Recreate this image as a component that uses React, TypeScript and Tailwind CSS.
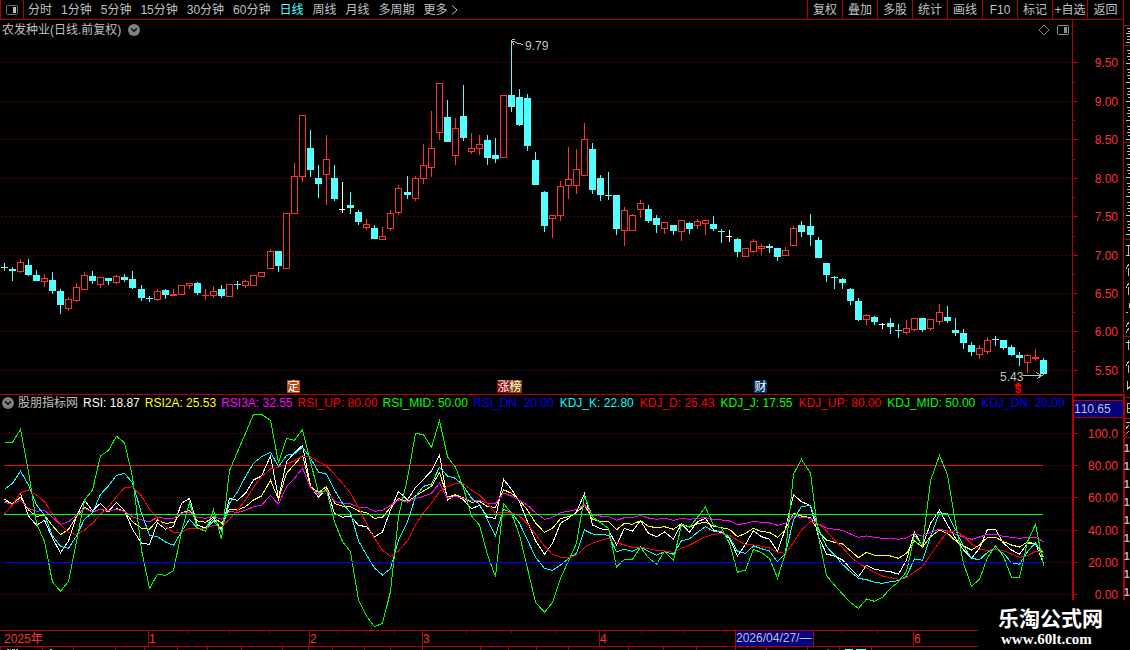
import { ChevronDown } from 'lucide-react';

type Tone = 'up' | 'down' | 'flat';
// tone, high, body top, body bottom, low
type Candle = [string, number, number, number, number];

const TONES: Record<string, Tone> = { u: 'up', d: 'down', f: 'flat' };
const TONE_COLORS: Record<Tone, string> = { up: '#ff3232', down: '#54ffff', flat: '#ffffff' };

const LINE = '#b40000';
const GRID = '#a00000';
const LABEL = '#ff3232';

const periods = ['分时', '1分钟', '5分钟', '15分钟', '30分钟', '60分钟', '日线', '周线', '月线', '多周期', '更多'];
const actions = ['复权', '叠加', '多股', '统计', '画线', 'F10', '标记', '+自选', '返回'];

const rsiLegend = [
  { name: 'RSI', value: '18.87', color: 'text-white' },
  { name: 'RSI2A', value: '25.53', color: 'text-[#ffff00]' },
  { name: 'RSI3A', value: '32.55', color: 'text-[#ff00ff]' },
  { name: 'RSI_UP', value: '80.00', color: 'text-[#ff0000]' },
  { name: 'RSI_MID', value: '50.00', color: 'text-[#00ff00]' },
  { name: 'RSI_DN', value: '20.00', color: 'text-[#0000ff]' },
];

const kdjLegend = [
  { name: 'KDJ_K', value: '22.80', color: 'text-[#00ffff]' },
  { name: 'KDJ_D', value: '25.43', color: 'text-[#ff0000]' },
  { name: 'KDJ_J', value: '17.55', color: 'text-[#00ff00]' },
  { name: 'KDJ_UP', value: '80.00', color: 'text-[#ff0000]' },
  { name: 'KDJ_MID', value: '50.00', color: 'text-[#00ff00]' },
  { name: 'KDJ_DN', value: '20.00', color: 'text-[#0000ff]' },
];

const candles: Candle[] = [
  ['d', 263, 267, 268, 271], ['d', 267, 269, 271, 281], ['u', 259, 262, 272, 273], ['d', 259, 265, 275, 276],
  ['d', 270, 275, 281, 281], ['u', 274, 278, 282, 287], ['d', 272, 280, 291, 294], ['d', 289, 291, 305, 314],
  ['u', 297, 299, 309, 311], ['u', 283, 287, 301, 302], ['u', 272, 275, 290, 290], ['d', 271, 276, 281, 284],
  ['u', 277, 277, 285, 288], ['d', 278, 278, 281, 285], ['u', 275, 276, 283, 284], ['d', 274, 277, 280, 282],
  ['d', 271, 279, 288, 289], ['d', 285, 289, 298, 301], ['d', 296, 298, 299, 302], ['u', 289, 291, 300, 301],
  ['d', 289, 290, 295, 299], ['u', 289, 294, 296, 296], ['u', 285, 285, 295, 295], ['u', 283, 283, 286, 289],
  ['d', 282, 283, 293, 295], ['u', 289, 295, 296, 300], ['u', 286, 291, 296, 298], ['d', 285, 289, 296, 298],
  ['u', 284, 284, 297, 297], ['d', 281, 284, 285, 289], ['u', 280, 281, 286, 288], ['u', 275, 275, 286, 286],
  ['u', 272, 272, 277, 277], ['u', 249, 251, 269, 269], ['d', 251, 251, 266, 272], ['u', 213, 213, 269, 269],
  ['u', 163, 176, 214, 214], ['u', 115, 115, 177, 182], ['d', 130, 148, 170, 177], ['d', 165, 178, 184, 198],
  ['u', 135, 159, 175, 205], ['d', 165, 178, 199, 201], ['f', 182, 209, 210, 213], ['d', 192, 205, 208, 214],
  ['d', 210, 212, 222, 225], ['u', 219, 224, 228, 230], ['d', 225, 228, 239, 239], ['u', 227, 236, 240, 240],
  ['u', 210, 213, 229, 231], ['u', 185, 188, 213, 215], ['d', 176, 192, 195, 199], ['u', 176, 178, 199, 201],
  ['u', 144, 165, 179, 184], ['u', 111, 148, 168, 177], ['u', 83, 83, 133, 140], ['d', 100, 117, 142, 142],
  ['u', 118, 128, 156, 165], ['d', 85, 116, 138, 141], ['u', 133, 148, 152, 154], ['u', 135, 144, 149, 155],
  ['d', 135, 140, 158, 165], ['d', 138, 155, 159, 163], ['u', 95, 95, 158, 158], ['d', 40, 95, 107, 112],
  ['d', 89, 97, 125, 126], ['d', 94, 98, 146, 151], ['d', 152, 160, 185, 185], ['d', 191, 192, 226, 232],
  ['u', 215, 215, 219, 238], ['u', 181, 186, 216, 221], ['u', 147, 179, 186, 199], ['u', 149, 169, 186, 194],
  ['u', 123, 139, 176, 176], ['d', 143, 149, 190, 194], ['d', 175, 178, 195, 201], ['d', 172, 195, 196, 200],
  ['d', 195, 195, 229, 235], ['u', 207, 210, 231, 246], ['u', 214, 215, 231, 231], ['u', 200, 203, 210, 218],
  ['d', 205, 209, 221, 223], ['d', 215, 218, 225, 233], ['u', 222, 222, 229, 234], ['d', 225, 225, 231, 235],
  ['u', 220, 220, 232, 241], ['d', 222, 223, 229, 234], ['u', 219, 221, 226, 229], ['u', 220, 220, 224, 235],
  ['d', 216, 224, 229, 231], ['d', 229, 231, 232, 243], ['f', 230, 236, 237, 242], ['d', 238, 239, 252, 257],
  ['u', 248, 248, 257, 257], ['u', 239, 241, 252, 253], ['u', 244, 246, 249, 255], ['d', 244, 246, 248, 253],
  ['d', 248, 248, 257, 261], ['u', 247, 250, 256, 256], ['u', 226, 228, 246, 246], ['d', 221, 225, 232, 237],
  ['d', 214, 226, 235, 246], ['d', 237, 240, 258, 258], ['d', 263, 263, 275, 282], ['d', 276, 277, 278, 289],
  ['d', 278, 279, 283, 289], ['d', 288, 289, 301, 305], ['d', 298, 301, 320, 321], ['u', 314, 315, 320, 325],
  ['d', 316, 317, 322, 325], ['f', 323, 324, 325, 329], ['d', 318, 323, 327, 334], ['d', 324, 330, 331, 338],
  ['u', 320, 328, 333, 335], ['u', 318, 318, 330, 331], ['d', 318, 318, 330, 332], ['u', 319, 319, 329, 331],
  ['u', 304, 312, 322, 325], ['d', 306, 317, 321, 323], ['d', 318, 330, 333, 336], ['d', 329, 333, 343, 349],
  ['d', 342, 345, 352, 356], ['u', 345, 348, 355, 359], ['u', 337, 340, 352, 354], ['d', 336, 339, 340, 346],
  ['d', 340, 340, 348, 350], ['d', 345, 347, 355, 356], ['d', 352, 355, 358, 366], ['u', 354, 355, 363, 373],
  ['u', 349, 357, 359, 361], ['d', 358, 360, 374, 375],
];

// Indicator samples, three units to a pixel, measured down from PLOT_TOP
const PLOT_TOP = 410;
const UNITS = 3;

const series = [
  {
    color: '#ffffff',
    points: [
      267, 283, 250, 318, 346, 331, 385, 428, 393, 320, 270, 302, 280, 304, 277, 302, 358, 400, 403, 338, 358, 349,
      280, 265, 346, 354, 325, 358, 265, 271, 250, 210, 198, 138, 265, 155, 128, 106, 228, 262, 235, 310, 322, 318,
      346, 350, 380, 366, 300, 244, 270, 232, 208, 183, 134, 270, 255, 270, 296, 286, 322, 325, 208, 238, 275, 335,
      392, 433, 400, 340, 325, 305, 251, 345, 356, 360, 405, 355, 364, 332, 370, 380, 366, 387, 341, 367, 335, 325,
      360, 368, 385, 438, 403, 362, 380, 388, 424, 355, 254, 275, 287, 380, 432, 438, 450, 475, 500, 466, 478, 482,
      485, 493, 450, 365, 410, 340, 301, 345, 385, 420, 445, 415, 358, 358, 400, 420, 433, 400, 400, 460,
    ],
  },
  {
    color: '#ffff00',
    points: [
      272, 282, 262, 300, 319, 316, 347, 374, 358, 320, 292, 306, 298, 305, 296, 304, 335, 355, 358, 330, 340, 338,
      308, 301, 333, 337, 322, 340, 298, 300, 290, 270, 258, 211, 268, 190, 163, 136, 230, 247, 230, 280, 289, 290,
      303, 308, 325, 322, 292, 265, 275, 258, 243, 229, 188, 262, 254, 264, 277, 274, 290, 292, 239, 250, 271, 300,
      339, 367, 355, 326, 320, 308, 285, 328, 334, 334, 359, 340, 343, 332, 349, 353, 350, 358, 341, 352, 341, 337,
      348, 353, 358, 380, 370, 355, 365, 367, 382, 358, 310, 318, 323, 365, 390, 397, 402, 422, 443, 427, 436, 436,
      438, 445, 430, 393, 411, 380, 360, 370, 392, 408, 420, 405, 382, 382, 395, 405, 411, 396, 401, 430,
    ],
  },
  {
    color: '#ff00ff',
    points: [
      277, 283, 271, 295, 304, 301, 322, 344, 335, 316, 295, 306, 298, 303, 298, 304, 320, 330, 335, 322, 325, 325,
      310, 306, 322, 325, 319, 328, 305, 307, 301, 290, 286, 256, 283, 230, 205, 175, 233, 254, 239, 274, 280, 281,
      292, 292, 304, 301, 286, 270, 276, 265, 259, 250, 220, 265, 259, 265, 272, 271, 280, 280, 250, 258, 271, 286,
      308, 328, 322, 308, 304, 298, 284, 315, 318, 318, 331, 323, 322, 316, 324, 328, 325, 331, 325, 328, 325, 323,
      328, 330, 333, 344, 340, 334, 337, 339, 346, 340, 319, 322, 325, 342, 354, 358, 361, 372, 382, 378, 382, 385,
      384, 388, 384, 370, 379, 367, 358, 363, 373, 381, 388, 381, 373, 373, 379, 382, 385, 382, 382, 395,
    ],
  },
  {
    color: '#00ffff',
    points: [
      238, 220, 184, 225, 285, 315, 378, 409, 415, 378, 328, 308, 253, 228, 196, 190, 218, 310, 375, 380, 396, 406,
      365, 328, 355, 357, 333, 362, 280, 245, 200, 160, 140, 127, 170, 136, 131, 112, 145, 186, 193, 240, 280, 308,
      392, 435, 474, 495, 476, 390, 335, 260, 229, 222, 172, 198, 205, 228, 265, 283, 330, 377, 298, 307, 340, 390,
      442, 475, 481, 465, 446, 430, 360, 372, 373, 376, 425, 418, 424, 412, 424, 436, 425, 433, 392, 387, 367, 350,
      364, 365, 382, 424, 430, 408, 416, 423, 455, 430, 330, 289, 287, 355, 410, 435, 463, 485, 505, 509, 517, 520,
      515, 512, 498, 447, 451, 380, 308, 311, 360, 408, 445, 449, 427, 416, 430, 458, 463, 425, 398, 442,
    ],
  },
  {
    color: '#ff0000',
    points: [
      312, 285, 248, 240, 255, 275, 312, 343, 368, 374, 360, 340, 312, 290, 260, 234, 230, 258, 298, 325, 350, 367,
      367, 355, 356, 355, 346, 350, 328, 300, 270, 232, 200, 177, 172, 163, 152, 137, 141, 155, 168, 193, 220, 250,
      293, 340, 385, 421, 439, 423, 392, 345, 308, 280, 244, 230, 220, 222, 240, 255, 280, 310, 307, 308, 318, 342,
      373, 408, 433, 442, 442, 436, 412, 400, 391, 385, 397, 405, 412, 412, 416, 421, 423, 427, 415, 405, 393, 380,
      373, 371, 376, 391, 404, 405, 409, 414, 427, 430, 397, 360, 335, 342, 363, 390, 413, 440, 460, 473, 487, 498,
      503, 508, 503, 485, 470, 435, 395, 366, 362, 378, 402, 418, 421, 418, 422, 432, 442, 437, 424, 428,
    ],
  },
  {
    color: '#00ff00',
    points: [
      97, 97, 58, 185, 340, 395, 516, 544, 514, 395, 270, 240, 138, 121, 79, 98, 200, 420, 535, 493, 496, 482,
      365, 278, 355, 363, 299, 388, 182, 125, 70, 13, 13, 31, 158, 85, 91, 59, 155, 249, 241, 335, 395, 425,
      570, 618, 650, 640, 545, 320, 205, 70, 74, 112, 32, 140, 172, 235, 318, 345, 435, 500, 280, 310, 375, 475,
      577, 607, 578, 505, 453, 400, 258, 320, 338, 355, 471, 448, 448, 412, 443, 463, 424, 451, 343, 352, 322, 291,
      345, 355, 400, 487, 480, 418, 428, 445, 505, 430, 193, 148, 190, 380, 497, 525, 552, 578, 595, 567, 574, 562,
      535, 515, 485, 375, 408, 212, 136, 195, 340, 460, 529, 508, 443, 407, 440, 502, 502, 395, 343, 467,
    ],
  },
];

const priceTicks = [
  { y: 62, label: '9.50' },
  { y: 101, label: '9.00' },
  { y: 139, label: '8.50' },
  { y: 178, label: '8.00' },
  { y: 216, label: '7.50' },
  { y: 255, label: '7.00' },
  { y: 293, label: '6.50' },
  { y: 331, label: '6.00' },
  { y: 370, label: '5.50' },
];

const valueTicks = [
  { y: 433, label: '100.0' },
  { y: 465, label: '80.00' },
  { y: 497, label: '60.00' },
  { y: 530, label: '40.00' },
  { y: 562, label: '20.00' },
  { y: 594, label: '0.00' },
];

const months = [
  { x: 148, label: '1' },
  { x: 309, label: '2' },
  { x: 422, label: '3' },
  { x: 599, label: '4' },
  { x: 913, label: '6' },
];
const weekTicks = [188, 229, 269, 337, 366, 394, 466, 511, 555, 641, 684, 726, 841, 877];
const tabDividers = [0, 42, 73, 115, 144, 177, 207, 241, 282, 308, 332, 364, 390, 422, 480, 508, 536, 568, 628, 663, 696, 735, 766, 807, 839, 871];

// Bars are eight pixels apart, with one spare pixel about every sixteen
const barX = (i: number) => 4 + 8 * i + Math.floor(i / 16.6 + 0.015);

function Axis({ ticks, top, bottom }: { ticks: { y: number; label: string }[]; top: number; bottom: number }) {
  return (
    <g shapeRendering="crispEdges">
      {ticks.map((tick, i) => (
        <g key={tick.label}>
          <line x1={1} x2={1072} y1={tick.y + 0.5} y2={tick.y + 0.5} stroke={GRID} strokeDasharray="1 3" />
          <rect x={1073} y={tick.y} width={5} height={1} fill={LINE} />
          {i < ticks.length - 1 && (
            <rect x={1073} y={Math.round((tick.y + ticks[i + 1].y) / 2)} width={2} height={1} fill={LINE} />
          )}
          <text x={1118} y={tick.y + 5} textAnchor="end" fill={LABEL} fontSize={12}>
            {tick.label}
          </text>
        </g>
      ))}
      <rect x={1072} y={top} width={1} height={bottom - top} fill={LINE} />
    </g>
  );
}

function Bar({ candle, index }: { candle: Candle; index: number }) {
  const [kind, high, top, bottom, low] = candle;
  const tone = TONES[kind];
  const color = TONE_COLORS[tone];
  const x = barX(index);
  const hollow = tone === 'up' && bottom - top > 2;

  return (
    <g fill={color}>
      {top > high && <rect x={x} y={high} width={1} height={top - high} />}
      {low > bottom && <rect x={x} y={bottom} width={1} height={low - bottom} />}
      {hollow ? (
        <rect x={x - 2.5} y={top + 0.5} width={6} height={bottom - top - 1} fill="none" stroke={color} />
      ) : (
        <rect x={x - 3} y={top} width={tone === 'flat' ? 6 : 7} height={bottom - top} />
      )}
    </g>
  );
}

function Badge({ x, text, fill }: { x: number; text: string; fill: string }) {
  return (
    <g>
      <rect x={x} y={380} width={13} height={13} fill={fill} />
      <text x={x + 6.5} y={391} textAnchor="middle" fontSize={12} fill="#ffffff">
        {text}
      </text>
    </g>
  );
}

function PriceChart() {
  return (
    <svg viewBox="0 38 1123 357" className="block h-auto w-full" role="img" aria-label="农发种业 日线">
      <Axis ticks={priceTicks} top={38} bottom={394} />
      <g shapeRendering="crispEdges">
        {candles.map((candle, i) => (
          <Bar key={i} candle={candle} index={i} />
        ))}
      </g>
      <g stroke="#c0c0c0" fill="none" shapeRendering="crispEdges">
        <path d="M511.5 40v5M512 39.5h3M512 41.5h3M515 42.500l4 1 4 1M512 42l2 2.500" />
        <path d="M1023 375.5h19M1036 372.5l6 3-5 3" />
      </g>
      <text x={525} y={50} fontSize={12} fill="#c0c0c0">9.79</text>
      <text x={1000} y={381} fontSize={12} fill="#c0c0c0">5.43</text>
      <Badge x={287} text="定" fill="#b84a10" />
      <Badge x={497} text="涨" fill="#8b0000" />
      <Badge x={509} text="榜" fill="#8b4500" />
      <Badge x={754} text="财" fill="#003366" />
      <path d="M1014 386l4-4 4 4z" fill="#ff0000" />
      <text x={1018} y={393} textAnchor="middle" fontSize={11} fontWeight={700} fill="#ff0000">$</text>
      <rect x={0} y={394} width={1123} height={1} fill={LINE} />
    </svg>
  );
}

function IndicatorChart() {
  return (
    <svg viewBox="0 413 1123 217" className="block h-auto w-full" role="img" aria-label="RSI KDJ">
      <Axis ticks={valueTicks} top={413} bottom={600} />
      <g shapeRendering="crispEdges">
        <rect x={1073} y={413} width={1} height={187} fill={LINE} />
        <rect x={4} y={465} width={1039} height={1} fill="#ff0000" />
        {series.map((line) => (
          <polyline
            key={line.color}
            points={line.points.map((v, i) => `${barX(i) + 0.5},${(PLOT_TOP + v / UNITS).toFixed(1)}`).join(' ')}
            fill="none"
            stroke={line.color}
          />
        ))}
        <rect x={4} y={514} width={1039} height={1} fill="#00ff00" />
        <rect x={4} y={562} width={1039} height={1} fill="#0000ff" />
      </g>
    </svg>
  );
}

function Timeline() {
  return (
    <svg viewBox="0 630 1123 20" className="block h-auto w-full" role="img" aria-label="2025年">
      <g fill={LINE} shapeRendering="crispEdges">
        <rect x={0} y={630} width={978} height={1} />
        <rect x={0} y={646} width={978} height={1} />
        {months.map((m) => (
          <rect key={m.x} x={m.x} y={631} width={1} height={15} />
        ))}
        {weekTicks.map((x) => (
          <rect key={x} x={x} y={631} width={1} height={2} />
        ))}
        {tabDividers.map((x) => (
          <rect key={x} x={x} y={647} width={1} height={3} />
        ))}
      </g>
      <text x={4} y={643} fontSize={12} fill={LABEL}>2025年</text>
      {months.map((m) => (
        <text key={m.x} x={m.x + 1} y={643} fontSize={12} fill={LABEL}>
          {m.label}
        </text>
      ))}
      <rect x={735.5} y={630.5} width={78} height={16} fill="#000080" stroke={LINE} shapeRendering="crispEdges" />
      <text x={736} y={642} fontSize={12} fill="#c0c0c0">2026/04/27/—</text>
      <path d="M7 649.5h2M10 649.5h1M12 649.5h3M16 649.5h2M50 649.5h2M828 649.5h1" stroke="#c0c0c0" />
      <path d="M845 649.5h8M856 649.5h10" stroke="#54ffff" />
    </svg>
  );
}

function SideStrip() {
  const rows = Array.from({ length: 10 }, (_, i) => 50 + i * 19);
  const quotes = Array.from({ length: 9 }, (_, i) => 452 + i * 18);

  return (
    <svg viewBox="0 0 7 650" className="block w-[7px] shrink-0" aria-hidden="true">
      <g fill={LINE} shapeRendering="crispEdges">
        <rect x={0} y={0} width={1} height={600} />
        <rect x={0} y={395} width={2} height={205} />
        {[25, 45, 142, 239, 336, 397, 418, 437].map((y) => (
          <rect key={y} x={0} y={y} width={7} height={1} />
        ))}
      </g>
      <g stroke="#c0c0c0" fill="none" shapeRendering="crispEdges">
        <path d="M4 28.500h3M5 31.500h2M3 33.500h4M4 36.500h3M4 39.500h3M3 42.500h4" />
        {rows.map((y) => (
          <path key={y} d={`M4 ${y + 0.5}h3M5 ${y + 3.5}h2M4 ${y + 6.5}h3M5 ${y + 9.5}h2M3 ${y + 13.5}h4`} />
        ))}
        <path d="M3 245.500h4M5.500 246v10M3 255.500h4M6 264l-3 5M5 268v8M6 283l-3 5M5 287v8M6 303v5M3 312h2M6 322l-3 5M6 328l-3 5" />
        <path d="M3 342.500h4M5.500 340v10M6 361l-3 5M5 365v8M4.500 381v8l3-3M3 422.500h4M6 425l-3 4M6 431l-3 3" />
      </g>
      <path d="M7 403.500H4.500v9H7M5 408.500h2" stroke="#c8c800" fill="none" shapeRendering="crispEdges" />
      {quotes.map((y) => (
        <text key={y} x={1} y={y} fontSize={10} fontWeight={700} fill="#c0c0c0">1</text>
      ))}
    </svg>
  );
}

function PanelIcon({ className, side }: { className: string; side: 'dark' | 'light' }) {
  return (
    <svg viewBox="0 0 12 12" className={className} aria-hidden="true">
      <rect
        x={0.5}
        y={1.5}
        width={11}
        height={9}
        rx={1}
        fill="none"
        stroke={side === 'dark' ? '#707070' : '#909090'}
      />
      <rect x={7} y={3} width={3} height={6} fill={side === 'dark' ? '#c0c0c0' : '#909090'} />
    </svg>
  );
}

function DropButton({ label }: { label: string }) {
  return (
    <button
      type="button"
      aria-label={label}
      className="flex size-3 shrink-0 items-center justify-center rounded-full bg-[#808080] text-black"
    >
      <ChevronDown size={10} strokeWidth={3} />
    </button>
  );
}

function Toolbar() {
  return (
    <nav className="flex h-5 items-stretch justify-between border-b border-[#b40000] whitespace-nowrap">
      <div className="flex items-center gap-[9px]">
        <button
          type="button"
          aria-label="侧栏"
          className="-mr-[5px] flex w-6 items-center justify-center self-stretch border-x border-[#b40000]"
        >
          <PanelIcon className="size-3" side="dark" />
        </button>
        {periods.map((period) => (
          <button key={period} type="button" className={period === '日线' ? 'text-[#54ffff]' : ''}>
            {period}
            {period === '更多' && (
              <svg viewBox="0 0 10 10" className="inline-block size-[10px]" aria-hidden="true">
                <path d="M4 0.500l5 4.500-5 4.500" fill="none" stroke="#c0c0c0" />
              </svg>
            )}
          </button>
        ))}
      </div>
      <div className="flex">
        {actions.map((action) => (
          <button
            key={action}
            type="button"
            className="w-[35px] border-l border-[#b40000] text-center last:w-9"
          >
            {action}
          </button>
        ))}
      </div>
    </nav>
  );
}

export default function App() {
  return (
    <div className="relative flex min-h-screen overflow-hidden bg-black font-['Liberation_Sans','Noto_Sans_CJK_SC',sans-serif] text-[12px] leading-[18px] text-[#c0c0c0] [font-kerning:none]">
      <main className="min-w-0 flex-1">
        <Toolbar />

        <header className="flex h-[18px] whitespace-nowrap">
          <div className="flex flex-1 items-center gap-[7px] border-r border-[#b40000] pt-[2px] pr-[3px] pl-[2px]">
            <h1>农发种业(日线.前复权)</h1>
            <DropButton label="切换股票" />
            <svg viewBox="0 0 12 12" className="ml-auto size-3" aria-hidden="true">
              <path d="M6 1l5 5-5 5-5-5z" fill="none" stroke="#808080" />
            </svg>
            <PanelIcon className="size-3" side="light" />
          </div>
          <div className="w-[50px]" />
        </header>
        <PriceChart />

        <div className="flex h-[18px] whitespace-nowrap">
          <div className="flex min-w-0 flex-1 items-center gap-[5px] overflow-hidden pb-[2px] pl-[2px] leading-[16px]">
            <div className="flex items-center gap-1">
              <DropButton label="指标菜单" />
              <h2>股朋指标网</h2>
            </div>
            <div className="flex gap-[5px]">
              {rsiLegend.map((item) => (
                <span key={item.name} className={item.color}>
                  {item.name}: {item.value}
                </span>
              ))}
            </div>
            <div className="flex gap-[6px] pl-px">
              {kdjLegend.map((item) => (
                <span key={item.name} className={item.color}>
                  {item.name}: {item.value}
                </span>
              ))}
            </div>
          </div>
          <div className="h-[23px] w-[51px] border-t border-l-2 border-[#b40000]">
            <div className="mt-[4px] h-[18px] border-y border-[#b40000] bg-[#000080] leading-[16px] text-[#c0c0c0]">
              110.65
            </div>
          </div>
        </div>
        <IndicatorChart />
        <Timeline />
      </main>

      <SideStrip />

      <div className="absolute right-0 bottom-0 flex h-[50px] w-[152px] flex-col items-start bg-black pt-[7px] pl-[20px] text-white">
        <p className="text-[21px] leading-[24px] font-bold">乐淘公式网</p>
        <a href="#" className="pl-[3px] font-['Liberation_Serif',serif] text-[15px] leading-[16px] font-bold">
          www.60lt.com
        </a>
      </div>
    </div>
  );
}
